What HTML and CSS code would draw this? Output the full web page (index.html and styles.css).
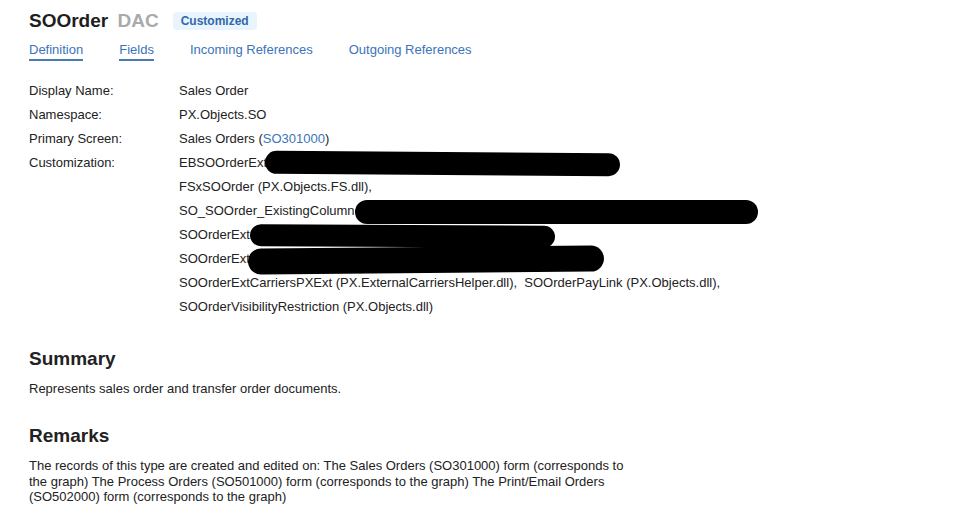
FILE: index.html
```html
<!DOCTYPE html>
<html lang="en">
  <head>
    <meta charset="utf-8" />
    <title>SOOrder DAC</title>
    <link rel="stylesheet" href="styles.css">
  </head>
  <body>
    <div class="page">
      <div class="title-row">
        <h1 class="title">SOOrder <span class="kind">DAC</span></h1>
        <span class="badge">Customized</span>
      </div>
      <nav class="tabs">
        <a class="tab underlined">Definition</a>
        <a class="tab underlined">Fields</a>
        <a class="tab">Incoming References</a>
        <a class="tab">Outgoing References</a>
      </nav>

      <div class="props">
        <div class="label">Display Name:</div>
        <div class="value">Sales Order</div>
        <div class="label">Namespace:</div>
        <div class="value">PX.Objects.SO</div>
        <div class="label">Primary Screen:</div>
        <div class="value">Sales Orders (<a class="link">SO301000</a>)</div>
        <div class="label">Customization:</div>
        <div class="value">
          <div class="line">EBSOOrderExt<span class="blot blot-1"></span></div>
          <div class="line">FSxSOOrder (PX.Objects.FS.dll),</div>
          <div class="line">SO_SOOrder_ExistingColumn<span class="blot blot-2"></span></div>
          <div class="line">SOOrderExt <span class="blot blot-3"></span></div>
          <div class="line">SOOrderExt<span class="blot blot-4"></span></div>
          <div class="line">SOOrderExtCarriersPXExt (PX.ExternalCarriersHelper.dll),&nbsp; SOOrderPayLink (PX.Objects.dll),</div>
          <div class="line">SOOrderVisibilityRestriction (PX.Objects.dll)</div>
        </div>
      </div>

      <h2 class="section">Summary</h2>
      <p class="text">Represents sales order and transfer order documents.</p>

      <h2 class="section">Remarks</h2>
      <p class="text remarks">The records of this type are created and edited on: The Sales Orders (SO301000) form (corresponds to the graph) The Process Orders (SO501000) form (corresponds to the graph) The Print/Email Orders (SO502000) form (corresponds to the graph)</p>
    </div>
  </body>
</html>
```

FILE: styles.css
```css
* {
  font-family: "Liberation Sans", Arial, sans-serif;
  box-sizing: border-box;
}

html, body {
  height: 100%;
  width: 100%;
}

body {
  margin: 0;
  background: #ffffff;
  color: #222222;
}

.page {
  padding: 9px 29px 0 29px;
}

.title-row {
  display: flex;
  align-items: center;
  gap: 14px;
  height: 24px;
}

.title {
  margin: 0;
  font-size: 19px;
  font-weight: 700;
  color: #1e1e1e;
}

.kind {
  margin-left: 4px;
  color: #aaaaaa;
}

.badge {
  background-color: #e8f4fe;
  color: #3368a8;
  font-size: 12px;
  font-weight: 700;
  padding: 2px 8px;
  border-radius: 4px;
  line-height: 14px;
}

.tabs {
  display: flex;
  gap: 36px;
  margin-top: 9px;
  font-size: 13px;
}

.tab {
  color: #3a74b8;
  padding-bottom: 2px;
  border-bottom: 2px solid transparent;
}

.underlined {
  border-bottom-color: #4a7bb5;
}

.props {
  display: grid;
  grid-template-columns: 150px 1fr;
  margin-top: 18px;
  font-size: 13px;
  line-height: 24px;
}

.label, .value {
  color: #222222;
}

.link {
  color: #3a74b8;
}

.line {
  height: 24px;
  white-space: nowrap;
}

.blot {
  display: inline-block;
  vertical-align: middle;
  background: #000000;
  border-radius: 13px;
}

.blot-1 {
  width: 355px;
  height: 23px;
  margin-left: -2px;
  transform: rotate(0.4deg);
}

.blot-2 {
  width: 403px;
  height: 24px;
  margin-left: 0;
}

.blot-3 {
  width: 305px;
  height: 22px;
  margin-left: -3px;
  transform: rotate(0.3deg);
}

.blot-4 {
  width: 356px;
  height: 26px;
  margin-left: -2px;
  transform: rotate(-0.5deg);
}

.section {
  margin: 29px 0 0 0;
  font-size: 19px;
  font-weight: 700;
  color: #222222;
}

.text {
  margin: 11px 0 0 0;
  font-size: 13px;
  color: #222222;
}

.remarks {
  max-width: 600px;
  line-height: 15.5px;
}
```
